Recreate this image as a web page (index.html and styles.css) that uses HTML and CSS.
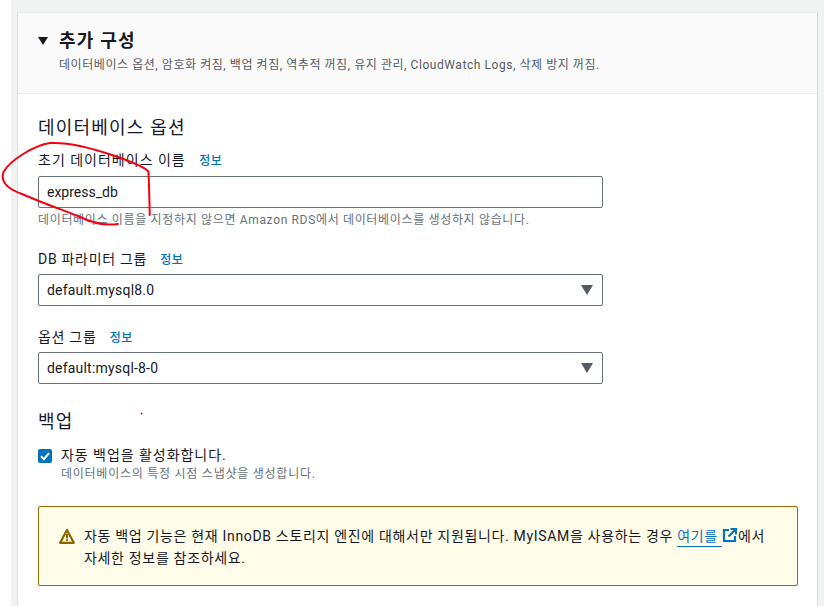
FILE: index.html
```html
<!DOCTYPE html>
<html lang="ko">
<head>
<meta charset="utf-8">
<title>추가 구성</title>
<link rel="stylesheet" href="styles.css">
</head>
<body>
<div class="page">
  <section class="card">
    <header class="card-head">
      <svg class="caret" viewBox="0 0 10 8" aria-hidden="true"><path d="M0 0H10L5 8Z"/></svg>
      <div>
        <h2 class="card-title">추가 구성</h2>
        <p class="card-sub">데이터베이스 옵션, 암호화 켜짐, 백업 켜짐, 역추적 꺼짐, 유지 관리, CloudWatch Logs, 삭제 방지 꺼짐.</p>
      </div>
    </header>
    <div class="card-body">
      <h3 class="section-title">데이터베이스 옵션</h3>
      <div class="field">
        <div class="label label-wide">초기 데이터베이스 이름 <a class="info">정보</a></div>
        <div class="control">express_db</div>
        <p class="hint">데이터베이스 이름을 지정하지 않으면 Amazon RDS에서 데이터베이스를 생성하지 않습니다.</p>
      </div>
      <div class="field field-b">
        <div class="label">DB 파라미터 그룹 <a class="info">정보</a></div>
        <div class="control select">default.mysql8.0<svg class="arrow" viewBox="0 0 12 10" aria-hidden="true"><path d="M0 0H12L6 10Z"/></svg></div>
      </div>
      <div class="field field-c">
        <div class="label">옵션 그룹 <a class="info">정보</a></div>
        <div class="control select">default:mysql-8-0<svg class="arrow" viewBox="0 0 12 10" aria-hidden="true"><path d="M0 0H12L6 10Z"/></svg></div>
      </div>
      <h3 class="section-title backup">백업</h3>
      <div class="check-row">
        <span class="checkbox"><svg viewBox="0 0 14 14" aria-hidden="true"><path d="M3 7.2L5.9 10.2L11 4.2" fill="none" stroke="#fff" stroke-width="2"/></svg></span>
        <div>
          <div class="check-label">자동 백업을 활성화합니다.</div>
          <div class="check-sub">데이터베이스의 특정 시점 스냅샷을 생성합니다.</div>
        </div>
      </div>
      <div class="alert">
        <svg class="warn" viewBox="0 0 16 16" aria-hidden="true"><path d="M8 2L1.2 14.8H14.8Z" fill="none" stroke="#8f6500" stroke-width="2.2" stroke-linejoin="round"/><path d="M8 6V10.4M8 11.2V13" fill="none" stroke="#8f6500" stroke-width="2"/></svg>
        <p class="alert-text">자동 백업 기능은 현재 InnoDB 스토리지 엔진에 대해서만 지원됩니다. MyISAM을 사용하는 경우 <a class="link">여기를 </a><svg class="ext" viewBox="0 0 15 15" aria-hidden="true"><path d="M7 2H2V13H13V8" fill="none" stroke="#0073bb" stroke-width="2.2"/><path d="M6.5 8.5L13 2M8.5 1H14V6.5" fill="none" stroke="#0073bb" stroke-width="2.2"/></svg>에서<br>자세한 정보를 참조하세요.</p>
      </div>
    </div>
  </section>
</div>
<svg class="scribble" viewBox="0 0 824 606" aria-hidden="true">
  <path d="M149.7 215C149.5 200 149 185 148.5 172C147 168 135 163 115 156C95 149 70 142 50 143C35 145 10 160 3.5 172C0 182 8 189 22 194C40 202 60 209 78 216C90 222 105 226 118 224" fill="none" stroke="#f5000f" stroke-width="2" stroke-linecap="round"/>
  <circle cx="141.5" cy="413.5" r="1" fill="#f5000f"/>
</svg>
</body>
</html>
```

FILE: styles.css
```css
* { box-sizing: border-box; }
html, body { margin: 0; height: 100%; }
body {
  position: relative;
  height: 606px;
  overflow: hidden;
  background: #fff;
  color: #16191f;
  font-family: Roboto, "Noto Sans CJK KR", sans-serif;
  font-size: 14px;
}
h2, h3, p { margin: 0; font-weight: inherit; }
.page {
  margin-left: 11px;
  height: 606px;
  padding: 12px 6px 0;
  background: #f1f3f3;
}
.card {
  height: 594px;
  background: #fff;
  border-left: 1px solid #dfe1e1;
  border-right: 1px solid #d5dbdb;
  border-top: 1px solid #eaeded;
}
.card-head {
  display: flex;
  height: 81px;
  padding: 17px 20px 0 20px;
  background: #fafafa;
  border-bottom: 1px solid #eaeded;
}
.caret { width: 10px; height: 8px; margin: 7px 11px 0 0; fill: #16191f; flex: none; }
.card-title { font-size: 18px; line-height: 22px; font-weight: 700; letter-spacing: 1.2px; }
.card-sub { margin-top: 5px; font-size: 12px; line-height: 16px; color: #545b64; letter-spacing: 0.56px; }
.card-body { padding: 21px 20px 0; }
.section-title { font-size: 18px; line-height: 26px; letter-spacing: 1.2px; }
.field { margin-top: 8px; width: 565px; }
.field-b { margin-top: 20px; }
.field-c { margin-top: 20px; }
.label { font-size: 14px; line-height: 22px; letter-spacing: 0.7px; }
.label-wide { letter-spacing: 1px; }
.info { margin-left: 9px; font-size: 12px; font-weight: 500; color: #0073bb; letter-spacing: 0.5px; }
.control {
  position: relative;
  height: 32px;
  margin-top: 4px;
  padding: 0 8px;
  border: 1px solid #687078;
  border-radius: 2px;
  font-size: 14px;
  line-height: 31px;
}
.select { margin-top: 3px; letter-spacing: 0.2px; }
.arrow { position: absolute; right: 9px; top: 10px; width: 12px; height: 10px; fill: #545b64; }
.hint { margin-top: 4px; font-size: 12px; line-height: 16px; color: #687078; letter-spacing: 0.66px; }
.backup { margin-top: 25px; }
.check-row { display: flex; gap: 9px; margin-top: 11px; }
.checkbox {
  width: 14px;
  height: 14px;
  margin-top: 3px;
  border-radius: 2px;
  background: #0073bb;
  flex: none;
}
.checkbox svg { display: block; width: 14px; height: 14px; }
.check-label { line-height: 18px; letter-spacing: 0.95px; }
.check-sub { margin-top: 1px; font-size: 12px; line-height: 18px; color: #687078; letter-spacing: 0.75px; }
.alert {
  display: flex;
  gap: 9px;
  width: 760px;
  height: 80px;
  margin-top: 23px;
  padding: 18px 20px 0;
  background: #fffce9;
  border: 1px solid #9a6b00;
  border-radius: 2px;
}
.warn { width: 16px; height: 16px; margin-top: 3px; flex: none; }
.alert-text { line-height: 22px; letter-spacing: 0.67px; }
.link { color: #0073bb; border-bottom: 1px solid #0073bb; padding-bottom: 2px; }
.ext { width: 15px; height: 15px; vertical-align: -2px; margin-right: 1px; }
.scribble { position: absolute; left: 0; top: 0; width: 824px; height: 606px; pointer-events: none; }
```
